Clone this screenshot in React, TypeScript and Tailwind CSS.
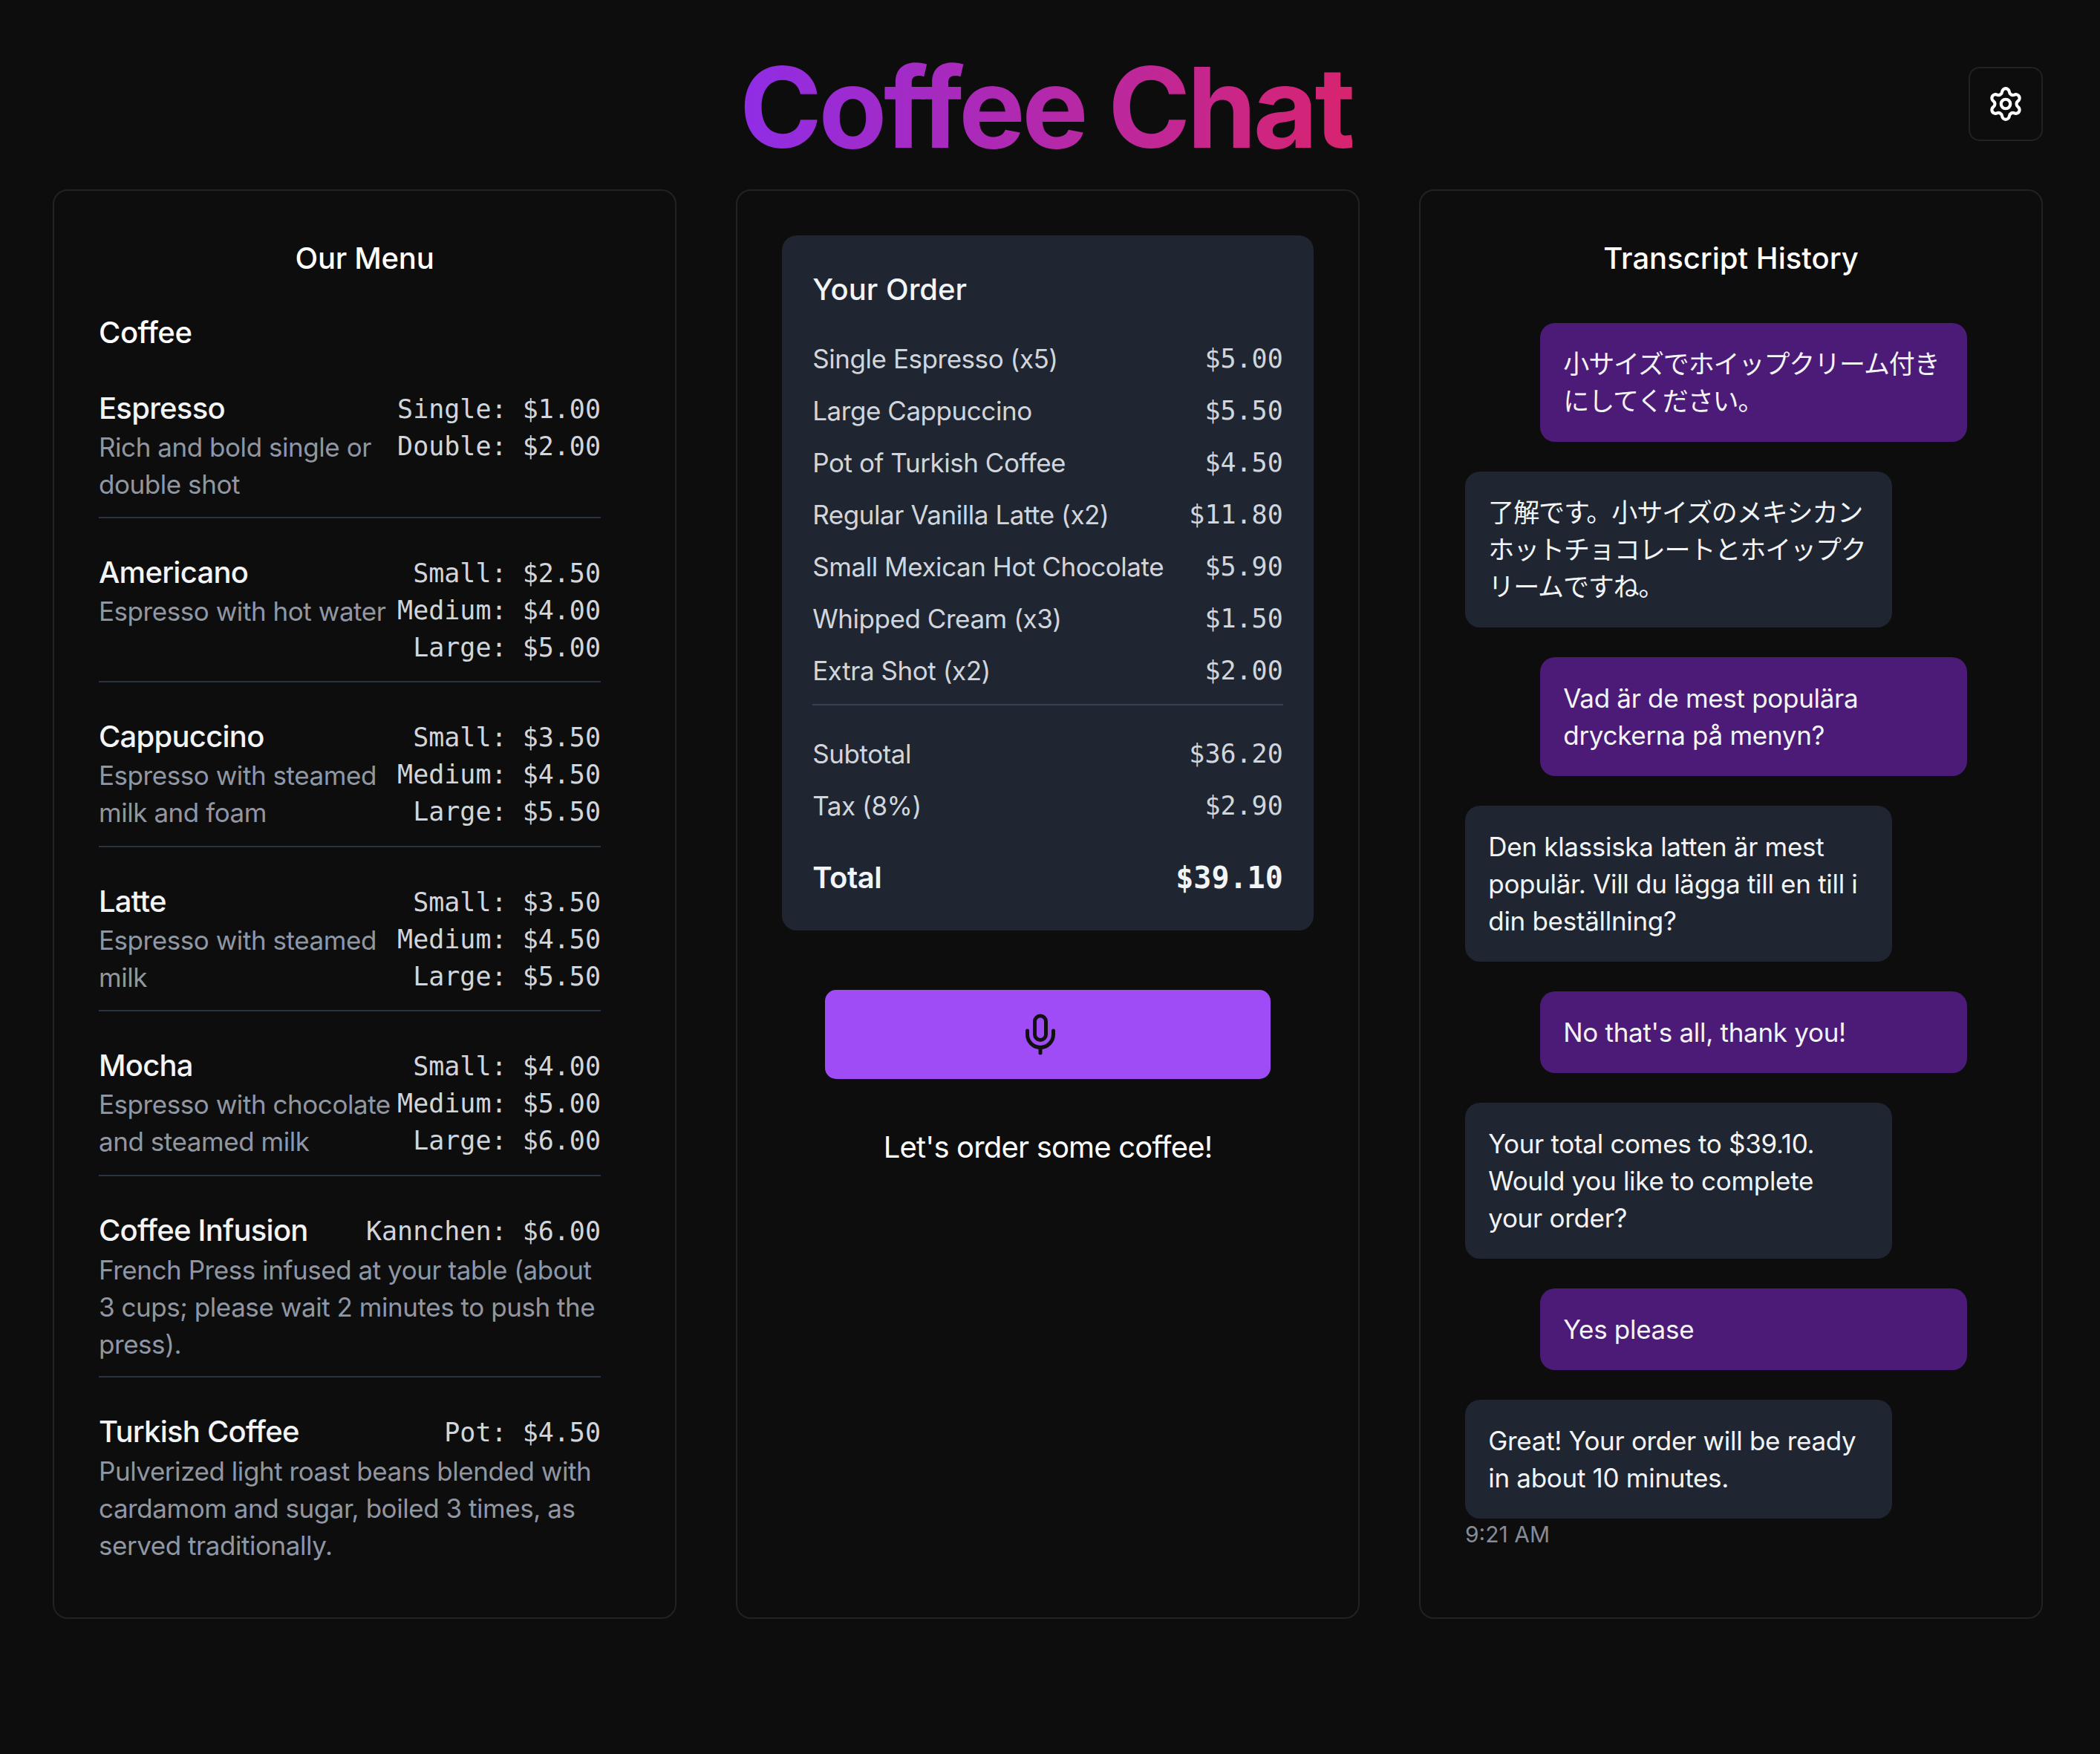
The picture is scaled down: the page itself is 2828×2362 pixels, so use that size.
import React from 'react';
import { Mic, Settings } from 'lucide-react';

type MenuItem = {
  name: string;
  description: string;
  prices: string[];
  wide?: boolean; // description runs under the price instead of beside it
};

const menuItems: MenuItem[] = [
  { name: 'Espresso', description: 'Rich and bold single or double shot', prices: ['Single: $1.00', 'Double: $2.00'] },
  { name: 'Americano', description: 'Espresso with hot water', prices: ['Small: $2.50', 'Medium: $4.00', 'Large: $5.00'] },
  { name: 'Cappuccino', description: 'Espresso with steamed milk and foam', prices: ['Small: $3.50', 'Medium: $4.50', 'Large: $5.50'] },
  { name: 'Latte', description: 'Espresso with steamed milk', prices: ['Small: $3.50', 'Medium: $4.50', 'Large: $5.50'] },
  { name: 'Mocha', description: 'Espresso with chocolate and steamed milk', prices: ['Small: $4.00', 'Medium: $5.00', 'Large: $6.00'] },
  {
    name: 'Coffee Infusion',
    description: 'French Press infused at your table (about 3 cups; please wait 2 minutes to push the press).',
    prices: ['Kannchen: $6.00'],
    wide: true,
  },
  {
    name: 'Turkish Coffee',
    description: 'Pulverized light roast beans blended with cardamom and sugar, boiled 3 times, as served traditionally.',
    prices: ['Pot: $4.50'],
    wide: true,
  },
];

const orderItems = [
  ['Single Espresso (x5)', '$5.00'],
  ['Large Cappuccino', '$5.50'],
  ['Pot of Turkish Coffee', '$4.50'],
  ['Regular Vanilla Latte (x2)', '$11.80'],
  ['Small Mexican Hot Chocolate', '$5.90'],
  ['Whipped Cream (x3)', '$1.50'],
  ['Extra Shot (x2)', '$2.00'],
];

const messages: { role: 'user' | 'assistant'; text: string; ja?: boolean }[] = [
  { role: 'user', text: '小サイズでホイップクリーム付きにしてください。', ja: true },
  { role: 'assistant', text: '了解です。小サイズのメキシカンホットチョコレートとホイップクリームですね。', ja: true },
  { role: 'user', text: 'Vad är de mest populära dryckerna på menyn?' },
  { role: 'assistant', text: 'Den klassiska latten är mest populär. Vill du lägga till en till i din beställning?' },
  { role: 'user', text: "No that's all, thank you!" },
  { role: 'assistant', text: 'Your total comes to $39.10. Would you like to complete your\u00a0order?' },
  { role: 'user', text: 'Yes please' },
  { role: 'assistant', text: 'Great! Your order will be ready in about 10 minutes.' },
];

const mono = "font-['DejaVu_Sans_Mono',monospace] tracking-normal";

const MenuRow = ({ item, last }: { item: MenuItem; last: boolean }) => {
  const prices = (
    <div className={`${mono} shrink-0 whitespace-nowrap pt-[3.5px] pb-[0.8px] text-right text-sm text-gray-300`}>
      {item.prices.map((price) => (
        <div key={price}>{price}</div>
      ))}
    </div>
  );
  const name = <h4 className="mt-[2px] font-[450] leading-[22px] tracking-[-0.3px] text-gray-100">{item.name}</h4>;

  return (
    <div className={last ? '' : 'border-b border-[#2a3340] pb-[7.5px]'}>
      {item.wide ? (
        <>
          <div className="flex items-start justify-between gap-1">
            {name}
            {prices}
          </div>
          <p className="text-sm text-[#9097a3]">{item.description}</p>
        </>
      ) : (
        <div className="flex items-start justify-between gap-[2px]">
          <div>
            {name}
            <p className="text-sm text-[#9097a3]">{item.description}</p>
          </div>
          {prices}
        </div>
      )}
    </div>
  );
};

const App = () => {
  return (
    <div className="[zoom:2.5] h-[944.8px] w-[1131.2px] bg-[#0d0d0d] pr-[2.4px] font-['Inter','Noto_Sans_CJK_JP',sans-serif] tracking-[-0.18px] text-white">
      <div className="mx-auto w-[1072px]">
        <header className="grid grid-cols-[1fr_auto_1fr] items-start pt-[28px] pb-[14px]">
          <div />
          <h1 className="mr-[2px] bg-linear-to-r/srgb from-[#8f2de6] to-[#d8246f] bg-clip-text text-6xl font-bold tracking-[-1.76px] text-transparent">
            Coffee Chat
          </h1>
          <button className="mt-2 flex h-10 w-10 items-center justify-center justify-self-end rounded-md border border-[#222222]">
            <Settings className="h-5 w-5" />
          </button>
        </header>

        <main className="grid h-[770px] grid-cols-3 gap-8">
          <section className="rounded-lg border border-[#222222] p-6">
            <h2 className="mt-[0.5px] mb-4 text-center font-medium tracking-[-0.1px]">Our Menu</h2>
            <h3 className="mb-[15.5px] font-medium">Coffee</h3>
            <div className="space-y-4 pr-4">
              {menuItems.map((item, i) => (
                <MenuRow key={item.name} item={item} last={i === menuItems.length - 1} />
              ))}
            </div>
          </section>

          <section className="flex flex-col items-center rounded-lg border border-[#222222] p-6">
            <div className="w-full rounded-lg bg-[#1f2631] px-[16.5px] pt-4 pb-[16.5px]">
              <h2 className="mt-px mb-[15.5px] font-medium tracking-normal text-gray-100">Your Order</h2>
              <div className="space-y-2 text-sm text-gray-300">
                {orderItems.map(([label, price]) => (
                  <div key={label} className="flex justify-between">
                    <span>{label}</span>
                    <span className={mono}>{price}</span>
                  </div>
                ))}
              </div>
              <div className="mt-2 space-y-2 border-t border-gray-700 pt-4 text-sm text-gray-300">
                <div className="flex justify-between">
                  <span>Subtotal</span>
                  <span className={mono}>$36.20</span>
                </div>
                <div className="flex justify-between">
                  <span>Tax (8%)</span>
                  <span className={mono}>$2.90</span>
                </div>
              </div>
              <div className="mt-[16.5px] flex justify-between font-semibold text-gray-100">
                <span>Total</span>
                <span className={`${mono} font-bold`}>$39.10</span>
              </div>
            </div>

            <button className="mt-8 flex w-60 items-center justify-center rounded-md bg-[#9f4cf7] py-3 text-[#111111]">
              <Mic className="mr-2 h-6 w-6" />
            </button>
            <p className="mt-[25px] tracking-[-0.33px] text-white">Let's order some coffee!</p>
          </section>

          <section className="rounded-lg border border-[#222222] p-6">
            <h2 className="mt-[0.5px] mb-[22.5px] text-center font-medium tracking-normal">Transcript History</h2>
            <div className="space-y-4 pr-4">
              {messages.map((message) => (
                <div key={message.text} className={message.role === 'user' ? 'flex justify-end' : 'flex justify-start'}>
                  <div
                    className={`w-[230px] rounded-lg px-[12.5px] py-3 text-sm text-gray-100 ${
                      message.role === 'user' ? 'bg-[#4c1b78]' : 'bg-[#1f2631]'
                    } ${message.ja ? 'tracking-[-0.44px]' : 'tracking-[-0.12px]'}`}
                  >
                    {message.text}
                  </div>
                </div>
              ))}
            </div>
            <p className="mt-px text-xs tracking-normal text-[#868b96]">9:21 AM</p>
          </section>
        </main>
      </div>
    </div>
  );
};

export default App;
